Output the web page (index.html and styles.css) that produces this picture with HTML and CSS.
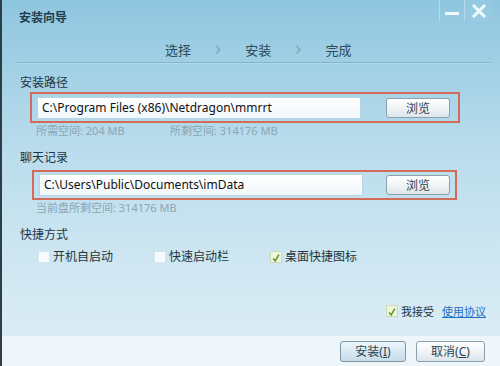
FILE: index.html
```html
<!DOCTYPE html>
<html lang="zh-CN">
<head>
  <meta charset="UTF-8">
  <title>安装向导</title>
  <link rel="stylesheet" href="styles.css">
</head>
<body>
  <div class="window">
    <header class="titlebar">
      <h1>安装向导</h1>
      <div class="controls">
        <span class="ctl"><i class="dash"></i></span>
        <span class="ctl close"><svg class="xicon" viewBox="0 0 14 14" width="14" height="14"><path d="M2 2 L12 12 M12 2 L2 12" stroke="#f2f9fc" stroke-width="3" stroke-linecap="square"/></svg></span>
      </div>
    </header>

    <nav class="steps">
      <span>选择</span><span class="arrow">›</span>
      <span>安装</span><span class="arrow">›</span>
      <span>完成</span>
    </nav>

    <main class="body">
      <h2 class="label">安装路径</h2>
      <div class="pathbox">
        <div class="input">C:\Program Files (x86)\Netdragon\mmrrt</div>
        <button class="btn browse">浏览</button>
      </div>
      <div class="hint">
        <span class="need">所需空间: 204 MB</span>
        <span>所剩空间: 314176 MB</span>
      </div>

      <h2 class="label">聊天记录</h2>
      <div class="pathbox second">
        <div class="input">C:\Users\Public\Documents\imData</div>
        <button class="btn browse">浏览</button>
      </div>
      <div class="hint">
        <span>当前盘所剩空间: 314176 MB</span>
      </div>

      <h2 class="label">快捷方式</h2>
      <div class="checks">
        <label class="check"><span class="box"></span>开机自启动</label>
        <label class="check"><span class="box"></span>快速启动栏</label>
        <label class="check"><span class="box on"><svg viewBox="0 0 12 12" width="12" height="12"><path d="M2.5 6.5 L5 9.5 L9.5 2" fill="none" stroke="#5f9e1c" stroke-width="2"/></svg></span>桌面快捷图标</label>
      </div>

      <div class="accept">
        <span class="box on"><svg viewBox="0 0 12 12" width="12" height="12"><path d="M2.5 6.5 L5 9.5 L9.5 2" fill="none" stroke="#5f9e1c" stroke-width="2"/></svg></span>
        <span class="agree">我接受</span>
        <a href="#" class="link">使用协议</a>
      </div>
    </main>

    <footer class="footer">
      <button class="btn install">安装(<u>I</u>)</button>
      <button class="btn cancel">取消(<u>C</u>)</button>
    </footer>
  </div>
</body>
</html>
```

FILE: styles.css
```css
body { margin: 0; font-family: "Noto Sans", "Noto Sans CJK SC", sans-serif; font-size: 12px; color: #24343e; }
.window { width: 498px; height: 366px; border-left: 2px solid #2c3e48; display: flex; flex-direction: column; background: linear-gradient(#8ec6df, #b9dcec 40%, #d7ebf4 85%, #dbedf5); overflow: hidden; }

.titlebar { height: 36px; display: flex; justify-content: space-between; }
.titlebar h1 { margin: 0; padding: 11px 0 0 17px; font-size: 12px; line-height: 14px; font-weight: bold; color: #1f3d4f; }
.controls { display: flex; flex-shrink: 0; height: 21px; margin-right: 8px; }
.ctl { width: 24px; flex-shrink: 0; border-left: 1px solid #b3d9ea; display: flex; justify-content: center; align-items: center; }
.ctl.close { width: 27px; background: rgba(255, 255, 255, 0.04); }
.dash { display: block; width: 14px; height: 3px; background: #f2f9fc; margin-top: 5px; }
.xicon { display: block; flex-shrink: 0; }

.steps { height: 26px; margin: 0 10px 0 15px; padding-left: 148px; display: flex; align-items: center; gap: 24px; font-size: 13px; color: #2c4a5c; border-bottom: 1px solid #7fb5cd; box-shadow: 0 1px 0 #b2d9ea; }
.steps .arrow { font-size: 20px; color: #7aa8bf; line-height: 1; margin-top: -3px; }

.body { flex: 1; padding-left: 18px; position: relative; }
.label { margin: 12px 0 0; font-size: 12px; font-weight: normal; line-height: 16px; color: #1f3442; }

.pathbox { width: 421px; height: 27px; margin: 1px 0 0 10px; border: 2px solid #d36b5b; display: flex; align-items: center; gap: 25px; padding-left: 5px; }
.pathbox.second { margin: 4px 0 0 12px; width: 416px; height: 26px; gap: 23px; }
.input { width: 318px; height: 20px; padding-left: 4px; background: linear-gradient(#ffffff, #f1f7fa); border: 1px solid #b9d4e2; font-size: 12px; line-height: 20px; color: #111; }
.btn { font-family: inherit; font-size: 12px; color: #2a4454; border: 1px solid #8aa0ad; border-radius: 3px; background: linear-gradient(#ffffff, #f0f4f6 50%, #dde6eb); padding: 0; }
.browse { width: 64px; height: 20px; }

.hint { height: 14px; margin-top: 1px; padding-left: 16px; display: flex; font-size: 11px; line-height: 14px; color: #8ba6b4; }
.hint .need { width: 134px; }

.checks { display: flex; margin: 7px 0 0 18px; }
.check { width: 116px; display: flex; align-items: center; gap: 3px; font-size: 12px; line-height: 14px; color: #24343e; }
.box { width: 12px; height: 12px; box-sizing: border-box; border: 1px solid #d5e6ee; background: #f8fbfd; display: inline-flex; }
.box.on { background: #eef6df; border-color: #c9dcb4; }

.accept { position: absolute; right: 14px; top: 240px; display: flex; align-items: center; gap: 3px; font-size: 11px; }
.agree { margin-right: 5px; }
.link { color: #1f6fc0; text-decoration: underline; }

.footer { height: 30px; background: #eef6fa; display: flex; justify-content: flex-end; align-items: center; gap: 10px; padding-right: 15px; }
.install { width: 66px; height: 21px; background: linear-gradient(#eef6fb, #d8e8f2 50%, #c8dde9); border-color: #7f98a8; }
.cancel { width: 69px; height: 21px; }
```
